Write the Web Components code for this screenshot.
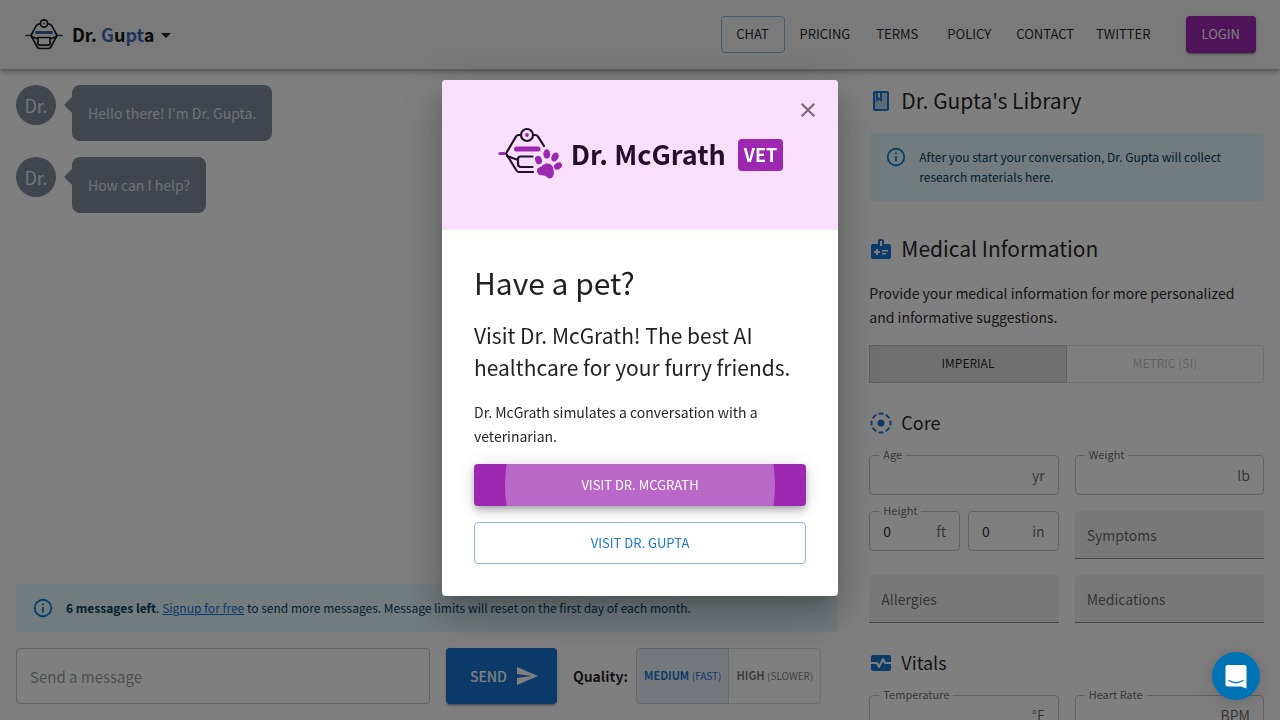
<!DOCTYPE html>
<html lang="en">
<head>
<meta charset="utf-8">
<title>Dr. Gupta</title>
<meta name="viewport" content="width=device-width, initial-scale=1">
<style>
  :root {
    --primary: #1976d2;
    --secondary: #9c27b0;
    --text: rgba(0, 0, 0, .87);
    --muted: rgba(0, 0, 0, .6);
    --line: rgba(0, 0, 0, .23);
    --radius: 4px;
  }
  html, body { height: 100%; margin: 0; }
  body {
    font-family: "Noto Sans CJK JP", "Noto Sans", sans-serif;
    font-size: 14px;
    line-height: 24px;
    color: var(--text);
    background: #fff;
    overflow: hidden;
  }
</style>
</head>
<body>
<gupta-app></gupta-app>

<script>
const BASE = `
  *, *::before, *::after { box-sizing: border-box; }
  button, input, a { font: inherit; color: inherit; }
  button { cursor: pointer; margin: 0; }
`;

function define(name, render) {
  customElements.define(name, class extends HTMLElement {
    constructor() {
      super();
      this.attachShadow({ mode: 'open' });
    }
    connectedCallback() {
      if (this.shadowRoot.childNodes.length) return;
      const template = document.createElement('template');
      template.innerHTML = `<style>${BASE}</style>` + render(this);
      this.shadowRoot.append(template.content.cloneNode(true));
    }
  });
}

const ICONS = {
  info: '<path d="M11 9h2V7h-2zM12 20c-4.410 0-8-3.590-8-8s3.590-8 8-8 8 3.590 8 8-3.590 8-8 8zM12 2a10 10 0 0 0-10 10 10 10 0 0 0 10 10 10 10 0 0 0 10-10A10 10 0 0 0 12 2zM11 17h2v-6h-2z"/>',
  close: '<path d="M19 6.410 17.590 5 12 10.590 6.410 5 5 6.410 10.590 12 5 17.590 6.410 19 12 13.410 17.590 19 19 17.590 13.410 12z"/>',
  send: '<path d="M2.010 21 23 12 2.010 3 2 10l15 2-15 2z"/>',
  drop: '<path d="m7 10 5 5 5-5z"/>',
  book: '<path opacity=".3" d="M13 13l-3-2.250L7 13V4H6v16h12V4h-5z"/><path d="M18 2H6c-1.100 0-2 .9-2 2v16c0 1.100.9 2 2 2h12c1.100 0 2-.9 2-2V4c0-1.100-.9-2-2-2zM9 4h2v5l-1-.75L9 9V4zm9 16H6V4h1v9l3-2.250L13 13V4h5v16z"/>',
  medical: '<path d="M20 7h-5V4c0-1.100-.9-2-2-2h-2c-1.100 0-2 .9-2 2v3H4c-1.100 0-2 .9-2 2v11c0 1.100.9 2 2 2h16c1.100 0 2-.9 2-2V9c0-1.100-.9-2-2-2zM11 4h2v5h-2V4zm0 12H9v2H7v-2H5v-2h2v-2h2v2h2v2zm2-1.500V13h6v1.500h-6zm0 3V16h4v1.500h-4z"/>',
  core: '<circle cx="12" cy="12" r="3.500"/><circle cx="12" cy="12" r="9.500" fill="none" stroke="currentColor" stroke-width="2" pathLength="80" stroke-dasharray="6.500 3.500" stroke-dashoffset="3.250"/>',
  vitals: '<path d="M15.110 12.450 14 10.240l-3.110 6.210c-.16.34-.51.55-.89.55s-.73-.21-.89-.55L7.380 13H2v5c0 1.100.9 2 2 2h16c1.100 0 2-.9 2-2v-5h-6c-.38 0-.73-.21-.89-.55z"/><path d="M20 4H4c-1.100 0-2 .9-2 2v5h6c.38 0 .73.21.89.55L10 13.760l3.110-6.210c.34-.68 1.450-.68 1.790 0L16.620 11H22V6c0-1.100-.9-2-2-2z"/>'
};

define('ui-icon', el => `
  <style>
    :host { display: block; width: 24px; height: 24px; flex: none; }
    svg { display: block; width: 100%; height: 100%; fill: currentColor; }
  </style>
  <svg viewBox="0 0 24 24" aria-hidden="true">${ICONS[el.getAttribute('name')]}</svg>
`);

define('gupta-logo', () => `
  <style>
    :host { display: block; width: 40px; height: 36px; }
    svg { display: block; width: 100%; height: 100%; }
  </style>
  <svg viewBox="24 17 40 36" fill="none" stroke="#16181c" stroke-width="1.700" stroke-linecap="round" stroke-linejoin="round" aria-hidden="true">
    <circle cx="44" cy="23.500" r="3.600"/><circle cx="44" cy="23.500" r=".8" fill="#16181c" stroke="none"/>
    <path d="M40.200 24H38.500l-2 1.200L31 35.500l6.500 12 1.500 1H49l1.500-1 6.500-12-5.500-10.300-2-1.200h-1.700"/>
    <path d="M38 37.500H50v6.500l-1.200 1.200h-9.600L38 44zM31.500 36.500l6.500 2.500M56.500 36.500 50 39"/>
    <path d="M26 35.500h4M58 35.500h4" stroke="#30405f"/>
    <path d="M36.500 32.500h15" stroke="#3c5fa8" stroke-width="2.800"/>
  </svg>
`);

define('mcgrath-logo', () => `
  <style>
    :host { display: block; width: 68px; height: 58px; }
    svg { display: block; width: 100%; height: 100%; }
  </style>
  <svg viewBox="497 126 68 58" fill="none" stroke="#24102c" stroke-width="2.200" stroke-linecap="round" stroke-linejoin="round" aria-hidden="true">
    <circle cx="527" cy="135" r="6"/>
    <circle cx="527" cy="135" r="1.900" fill="#9c27b0" stroke="none"/>
    <path d="M521 135h-2.500q-1.500 0-2.500 1.500L506 153.500l10.500 17q1 1.500 2.500 1.500h14M533 135h2.500q1.500 0 2.500 1.500l6 9.500"/>
    <path d="M532.500 156.500h-12q-2.500 0-2.500 2.500v5q0 3 3 3h11.500M507 156l11 4"/>
    <path d="M500 153.500h4" stroke="#9c27b0" stroke-width="3.200"/>
    <path d="M516.500 149h21.500" stroke="#9c27b0" stroke-width="5"/>
    <g fill="#9c27b0" stroke="none">
      <ellipse cx="538.500" cy="160" rx="3.300" ry="4.300" transform="rotate(-20 538.500 160)"/>
      <ellipse cx="546.800" cy="154" rx="3.500" ry="4.700"/>
      <ellipse cx="555" cy="157" rx="3.400" ry="4.800" transform="rotate(28 555 157)"/>
      <ellipse cx="558" cy="166" rx="3.200" ry="4.300" transform="rotate(60 558 166)"/>
      <path d="M537 170.500c0-3.500 4-3 6-5.500 3-3 9-1.500 10 2.500.5 3 1.500 4 .5 7.500-.8 3-3.500 4.500-6 2.500-2.500-2.500-5-1.500-7.500-2.500-2-.8-3-2.500-3-4.500z"/>
    </g>
  </svg>
`);

define('nav-button', el => `
  <style>
    :host { display: block; }
    a, button {
      display: flex; align-items: center; justify-content: center;
      min-width: 64px; padding: 4px 6px 6px; border: 1px solid transparent;
      border-radius: var(--radius); background: none; text-decoration: none;
      font-size: 13px; line-height: 25px; white-space: nowrap;
    }
    :host([variant="outlined"]) a { border-color: rgba(25, 118, 210, .5); }
    :host([variant="filled"]) button {
      padding-left: 15px; padding-right: 15px; background: var(--secondary); color: #fff;
      box-shadow: 0 3px 1px -2px rgba(0,0,0,.2), 0 2px 2px rgba(0,0,0,.14), 0 1px 5px rgba(0,0,0,.12);
    }
  </style>
  ${el.getAttribute('variant') === 'filled'
    ? '<button type="button"><slot></slot></button>'
    : '<a href="#"><slot></slot></a>'}
`);

define('app-header', () => `
  <style>
    :host {
      display: flex; align-items: center; justify-content: space-between;
      padding: 16px 24px; background: #f5f5f5; position: relative; z-index: 1;
      box-shadow: 0 2px 4px -1px rgba(0,0,0,.2), 0 4px 5px rgba(0,0,0,.14), 0 1px 10px rgba(0,0,0,.12);
    }
    .brand { display: flex; align-items: center; gap: 8px; padding: 0; border: 0; background: none; }
    .name { padding-bottom: 2px; font-size: 18px; line-height: 32px; font-weight: 700; color: #111; }
    .name i { font-style: normal; color: #3f6ab8; }
    .brand ui-icon { margin-left: -8px; }
    nav { display: flex; align-items: center; gap: 8px; }
    .login { margin-left: 20px; }
  </style>
  <button class="brand" type="button" aria-haspopup="menu">
    <gupta-logo></gupta-logo>
    <span class="name">Dr. <i>G</i>u<i>pt</i>a</span>
    <ui-icon name="drop"></ui-icon>
  </button>
  <nav>
    <nav-button variant="outlined">CHAT</nav-button>
    <nav-button>PRICING</nav-button>
    <nav-button>TERMS</nav-button>
    <nav-button>POLICY</nav-button>
    <nav-button>CONTACT</nav-button>
    <nav-button>TWITTER</nav-button>
    <nav-button class="login" variant="filled">LOGIN</nav-button>
  </nav>
`);

define('chat-message', () => `
  <style>
    :host { display: flex; align-items: flex-start; gap: 16px; --bubble: #808b9c; }
    .avatar {
      width: 40px; height: 40px; border-radius: 50%; background: var(--bubble);
      color: #e4e8ee; font-size: 18px; line-height: 40px; text-align: center;
    }
    .bubble {
      position: relative; padding: 16px; border-radius: 8px;
      background: var(--bubble); color: #dfe3ea;
    }
    .bubble::before {
      content: ""; position: absolute; left: -8px; top: 12px;
      border: solid transparent; border-width: 8px 8px 8px 0; border-right-color: var(--bubble);
    }
  </style>
  <div class="avatar" aria-hidden="true">Dr.</div>
  <div class="bubble"><slot></slot></div>
`);

define('info-alert', () => `
  <style>
    :host {
      display: flex; gap: 12px; padding: 14px 16px; border-radius: var(--radius);
      background: #e5f6fd; color: #014361; font-size: 12px; line-height: 20px;
    }
    ui-icon { width: 22px; height: 22px; margin: -1px 0; color: #0288d1; }
  </style>
  <ui-icon name="info"></ui-icon>
  <div><slot></slot></div>
`);

define('message-composer', () => `
  <style>
    :host { display: flex; align-items: stretch; gap: 16px; padding-right: 16px; }
    input {
      flex: 1; min-width: 0; height: 56px; padding: 0 13px; font-size: 15px;
      border: 1px solid var(--line); border-radius: var(--radius); background: none;
    }
    input::placeholder { color: rgba(0, 0, 0, .42); opacity: 1; }
    .send {
      display: flex; align-items: center; gap: 8px; padding: 0 18px 0 24px; border: 0;
      border-radius: var(--radius); background: var(--primary); color: #fff; font-weight: 500;
      box-shadow: 0 3px 1px -2px rgba(0,0,0,.2), 0 2px 2px rgba(0,0,0,.14), 0 1px 5px rgba(0,0,0,.12);
    }
    .quality { display: flex; align-items: center; gap: 8px; }
    .label { font-weight: 700; }
    .group { display: flex; align-self: stretch; }
    .group button {
      padding: 0 7px 2px; border: 1px solid rgba(0, 0, 0, .12); background: none;
      color: rgba(0, 0, 0, .54); font-size: 11px; font-weight: 700; white-space: nowrap;
    }
    .group button:first-child { border-radius: var(--radius) 0 0 var(--radius); }
    .group button:last-child { border-radius: 0 var(--radius) var(--radius) 0; border-left: 0; }
    .group button[aria-pressed="true"] { background: #e8f0fb; color: var(--primary); }
    small { font-size: 10px; font-weight: 400; }
  </style>
  <input type="text" placeholder="Send a message" aria-label="Send a message">
  <button class="send" type="button">SEND <ui-icon name="send"></ui-icon></button>
  <div class="quality">
    <span class="label" id="quality">Quality:</span>
    <div class="group" role="group" aria-labelledby="quality">
      <button type="button" aria-pressed="true">MEDIUM <small>(FAST)</small></button>
      <button type="button" aria-pressed="false">HIGH <small>(SLOWER)</small></button>
    </div>
  </div>
`);

define('chat-panel', () => `
  <style>
    :host { display: flex; flex-direction: column; gap: 16px; padding: 16px; min-width: 0; }
    .log { flex: 1; display: flex; flex-direction: column; gap: 16px; min-height: 0; }
    a { color: var(--primary); }
  </style>
  <div class="log" role="log">
    <chat-message>Hello there! I'm Dr. Gupta.</chat-message>
    <chat-message>How can I help?</chat-message>
  </div>
  <info-alert><b>6 messages left</b>. <a href="#">Signup for free</a> to send more messages. Message limits will reset on the first day of each month.</info-alert>
  <message-composer></message-composer>
`);

define('section-heading', el => `
  <style>
    :host { display: block; }
    h2, h3 { display: flex; align-items: center; gap: 8px; margin: 0; font-weight: 400; font-size: 21px; line-height: 30px; }
    h3 { font-size: 18px; }
    ui-icon { color: var(--primary); }
    span { padding-bottom: 2px; }
  </style>
  <h${el.getAttribute('level')}><ui-icon name="${el.getAttribute('icon')}"></ui-icon><span><slot></slot></span></h${el.getAttribute('level')}>
`);

define('unit-field', el => `
  <style>
    :host { display: block; min-width: 0; }
    .box {
      position: relative; display: flex; align-items: center; height: 40px; padding: 0 13px;
      border: 1px solid var(--line); border-radius: var(--radius);
    }
    label {
      position: absolute; left: 9px; top: -12px; padding: 0 4px; background: #fff;
      font-size: 11px; line-height: 20px; color: var(--muted);
    }
    input { flex: 1; min-width: 0; width: 0; border: 0; padding: 0; background: none; outline: 0; }
    span { color: var(--muted); }
  </style>
  <div class="box">
    ${el.hasAttribute('label') ? `<label for="f">${el.getAttribute('label')}</label>` : ''}
    <input id="f" type="text" inputmode="numeric" value="${el.getAttribute('value') || ''}" ${el.hasAttribute('label') ? '' : `aria-label="${el.getAttribute('name')}"`}>
    <span>${el.getAttribute('unit')}</span>
  </div>
`);

define('filled-field', el => `
  <style>
    :host { display: block; min-width: 0; }
    input {
      display: block; width: 100%; height: 48px; padding: 0 12px; border: 0;
      border-bottom: 1px solid rgba(0, 0, 0, .42); border-radius: var(--radius) var(--radius) 0 0;
      background: rgba(0, 0, 0, .06);
    }
    input::placeholder { color: var(--muted); opacity: 1; }
  </style>
  <input type="text" placeholder="${el.getAttribute('label')}" aria-label="${el.getAttribute('label')}">
`);

define('unit-toggle', () => `
  <style>
    :host { display: grid; grid-template-columns: 1fr 1fr; }
    button {
      height: 38px; padding: 0 0 2px; border: 1px solid rgba(0, 0, 0, .12); background: none;
      color: rgba(0, 0, 0, .26); font-size: 12px;
    }
    button:first-child { border-radius: var(--radius) 0 0 var(--radius); }
    button:last-child { border-left: 0; border-radius: 0 var(--radius) var(--radius) 0; }
    button[aria-pressed="true"] { background: rgba(0, 0, 0, .12); color: var(--text); }
  </style>
  <button type="button" aria-pressed="true">IMPERIAL</button>
  <button type="button" aria-pressed="false">METRIC (SI)</button>
`);

define('medical-panel', () => `
  <style>
    :host { display: block; padding: 16px; min-width: 0; overflow: hidden; }
    info-alert { margin: 16px 0 32px; }
    p { margin: 16px 0; padding-right: 16px; }
    .sub { margin: 24px 0 16px; }
    .fields { display: grid; grid-template-columns: 1fr 1fr; gap: 16px; align-items: start; }
    .pair { display: grid; grid-template-columns: 1fr 1fr; gap: 8px; }
  </style>
  <section-heading level="2" icon="book">Dr. Gupta's Library</section-heading>
  <info-alert>After you start your conversation, Dr. Gupta will collect research materials here.</info-alert>
  <section-heading level="2" icon="medical">Medical Information</section-heading>
  <p>Provide your medical information for more personalized and informative suggestions.</p>
  <unit-toggle></unit-toggle>
  <section-heading class="sub" level="3" icon="core">Core</section-heading>
  <div class="fields">
    <unit-field label="Age" unit="yr"></unit-field>
    <unit-field label="Weight" unit="lb"></unit-field>
    <div class="pair">
      <unit-field label="Height" unit="ft" value="0"></unit-field>
      <unit-field name="Height, inches" unit="in" value="0"></unit-field>
    </div>
    <filled-field label="Symptoms"></filled-field>
    <filled-field label="Allergies"></filled-field>
    <filled-field label="Medications"></filled-field>
  </div>
  <section-heading class="sub" level="3" icon="vitals">Vitals</section-heading>
  <div class="fields">
    <unit-field label="Temperature" unit="°F"></unit-field>
    <unit-field label="Heart Rate" unit="BPM"></unit-field>
  </div>
`);

define('promo-dialog', () => `
  <style>
    :host {
      position: fixed; inset: 0; z-index: 10; display: flex; align-items: flex-start; justify-content: center;
      padding: 80px 16px 0; background: rgba(0, 0, 0, .5);
    }
    .paper {
      position: relative; width: 100%; max-width: 396px; border-radius: var(--radius); background: #fff;
      box-shadow: 0 11px 15px -7px rgba(0,0,0,.2), 0 24px 38px 3px rgba(0,0,0,.14), 0 9px 46px 8px rgba(0,0,0,.12);
    }
    header {
      display: flex; align-items: center; justify-content: center; height: 150px;
      border-radius: var(--radius) var(--radius) 0 0; background: #f8dffc;
    }
    .name { margin-left: 6px; padding-bottom: 2px; font-size: 27px; line-height: 40px; font-weight: 700; color: #24102c; }
    .vet {
      margin-left: 12px; padding: 0 6px 2px; border-radius: var(--radius); background: var(--secondary);
      color: #fff; font-size: 18px; line-height: 30px; font-weight: 700;
    }
    .close {
      position: absolute; top: 10px; right: 10px; padding: 8px; border: 0; background: none; color: rgba(0, 0, 0, .54);
    }
    .body { display: flex; flex-direction: column; gap: 16px; padding: 32px; }
    h1, h2, p { margin: 0; font-weight: 400; }
    h1 { font-size: 30px; line-height: 40px; }
    h2 { padding: 1px 0; font-size: 21px; line-height: 32px; }
    .body button {
      position: relative; overflow: hidden; padding: 7px 16px; border: 1px solid rgba(25, 118, 210, .5);
      border-radius: var(--radius); background: none; color: var(--primary); font-size: 13px; line-height: 26px;
    }
    .body .primary {
      padding: 8px 17px; border: 0; background: var(--secondary); color: #fff;
      box-shadow: 0 3px 5px -1px rgba(0,0,0,.2), 0 6px 10px rgba(0,0,0,.14), 0 1px 18px rgba(0,0,0,.12);
    }
    .primary::before {
      content: ""; position: absolute; left: 50%; top: 50%; width: 270px; height: 270px;
      margin: -135px 0 0 -135px; border-radius: 50%; background: rgba(255, 255, 255, .3);
    }
  </style>
  <div class="paper" role="dialog" aria-modal="true" aria-labelledby="title">
    <header>
      <mcgrath-logo></mcgrath-logo>
      <span class="name">Dr. McGrath</span>
      <span class="vet">VET</span>
    </header>
    <button class="close" type="button" aria-label="Close"><ui-icon name="close"></ui-icon></button>
    <div class="body">
      <h1 id="title">Have a pet?</h1>
      <h2>Visit Dr. McGrath! The best AI healthcare for your furry friends.</h2>
      <p>Dr. McGrath simulates a conversation with a veterinarian.</p>
      <button class="primary" type="button">VISIT DR. MCGRATH</button>
      <button type="button">VISIT DR. GUPTA</button>
    </div>
  </div>
`);

define('chat-launcher', () => `
  <style>
    :host { position: fixed; right: 20px; bottom: 20px; z-index: 20; display: block; }
    button {
      display: grid; place-items: center; width: 48px; height: 48px; padding: 0; border: 0; border-radius: 50%;
      background: #0073b7; box-shadow: 0 1px 6px rgba(0,0,0,.06), 0 2px 32px rgba(0,0,0,.16);
    }
    svg { display: block; width: 22px; height: 25px; }
  </style>
  <button type="button" aria-label="Open chat">
    <svg viewBox="0 0 22 25" aria-hidden="true">
      <path fill="#fff" d="M2.500 1h17q2 0 2 2v21.500l-5.500-2H2.500q-2 0-2-2V3q0-2 2-2z"/>
      <path fill="none" stroke="#0073b7" stroke-width="1.300" stroke-linecap="round" d="M4 16.500q7 4.500 14 0"/>
    </svg>
  </button>
`);

define('gupta-app', () => `
  <style>
    :host { display: flex; flex-direction: column; height: 100vh; }
    main { flex: 1; min-height: 0; display: grid; grid-template-columns: 2fr 1fr; grid-template-rows: minmax(0, 1fr); }
  </style>
  <app-header></app-header>
  <main>
    <chat-panel></chat-panel>
    <medical-panel></medical-panel>
  </main>
  <promo-dialog></promo-dialog>
  <chat-launcher></chat-launcher>
`);
</script>
</body>
</html>
